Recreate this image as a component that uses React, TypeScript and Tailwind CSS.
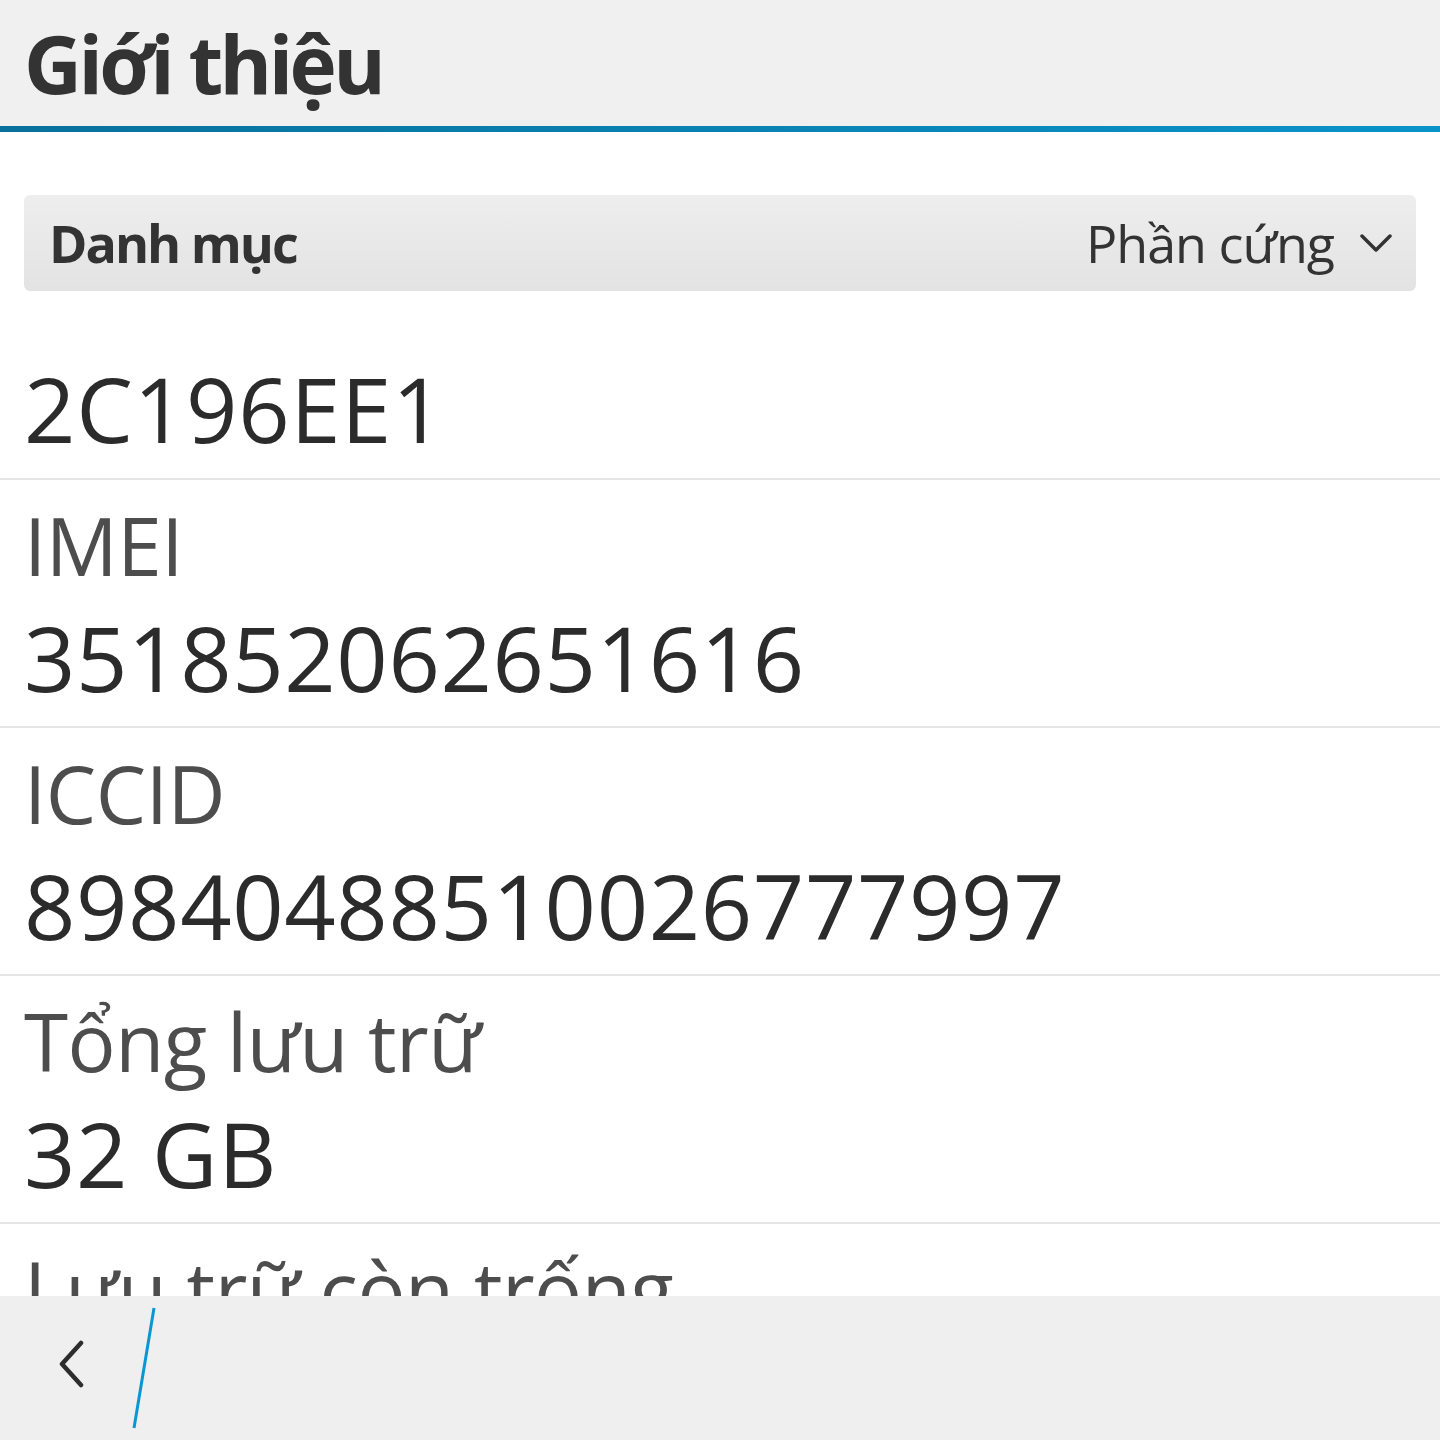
const font = { fontFamily: '"Open Sans", "Noto Sans", sans-serif' };

const rows = [
  { label: 'IMEI', value: '351852062651616' },
  { label: 'ICCID', value: '89840488510026777997' },
  { label: 'Tổng lưu trữ', value: '32 GB' },
  { label: 'Lưu trữ còn trống', value: '26,4 GB' },
];

export default function App() {
  return (
    <div className="h-[1440px] w-[1440px] flex flex-col overflow-hidden bg-white" style={font}>
      {/* Title bar */}
      <header className="h-[126px] shrink-0 bg-[#f0f0f0] pl-[24px] pt-[13px]">
        <h1 className="text-[80px] leading-[100px] font-bold tracking-[-3.5px] text-[#333333]">Giới thiệu</h1>
      </header>
      <div className="h-[6px] shrink-0 bg-gradient-to-r from-[#08719c] to-[#0a93c9]" />

      {/* Content */}
      <main className="flex-1 overflow-hidden pt-[63px]">
        <div className="mx-[24px] h-[96px] rounded-[6px] bg-gradient-to-b from-[#eeeeee] to-[#e3e3e3] flex items-center justify-between pl-[25px] pr-[24px]">
          <span className="text-[52px] leading-none font-bold tracking-[-2px] text-[#333333]">Danh mục</span>
          <div className="flex items-center gap-[26px]">
            <span className="text-[52px] leading-none text-[#333333] tracking-[-1px]">Phần cứng</span>
            <svg width="32" height="20" viewBox="0 0 32 20" fill="none" stroke="#333333" strokeWidth="3.5" strokeLinecap="round" strokeLinejoin="round">
              <path d="M2 3 L16 17 L30 3" />
            </svg>
          </div>
        </div>

        <div className="pt-[62px] pb-[15px] border-b-2 border-[#e6e6e6] px-[24px]">
          <div className="text-[90px] leading-[110px] tracking-[0.8px] text-[#2b2b2b]">2C196EE1</div>
        </div>

        {rows.map((r) => (
          <div key={r.label} className="pt-[7px] pb-[14px] border-b-2 border-[#e6e6e6] px-[24px]">
            <div className="text-[80px] leading-[115px] text-[#4d4d4d] tracking-[-0.5px]">{r.label}</div>
            <div className="text-[90px] leading-[110px] tracking-[0.6px] text-[#2b2b2b]">{r.value}</div>
          </div>
        ))}
      </main>

      {/* Action bar */}
      <footer className="h-[144px] shrink-0 bg-[#efefef] flex items-start">
        <div className="w-[134px] h-full flex items-center justify-center">
          <svg width="30" height="50" viewBox="0 0 30 50" fill="none" stroke="#2d2d2d" strokeWidth="4.5" strokeLinecap="round" strokeLinejoin="round" className="ml-[10px] mt-[-6px]">
            <path d="M24 3 L5 24 L24 45" />
          </svg>
        </div>
        <svg width="26" height="144" viewBox="0 0 26 144" fill="none" stroke="#0a96d2" strokeWidth="3" className="ml-[-4px]">
          <path d="M24 12 L4 132" />
        </svg>
      </footer>
    </div>
  );
}
